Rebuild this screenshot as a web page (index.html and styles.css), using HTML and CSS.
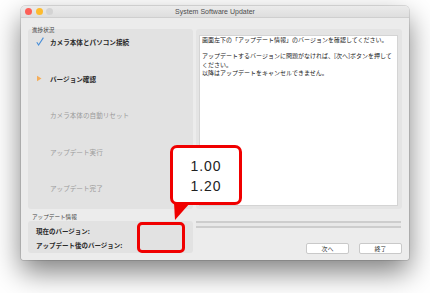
FILE: index.html
```html
<!DOCTYPE html>
<html lang="ja">
<head>
    <meta charset="UTF-8">
    <title>System Software Updater</title>
    <link rel="stylesheet" href="styles.css">
</head>
<body>
    <div class="window">
        <div class="titlebar">
            <span class="light red"></span>
            <span class="light yellow"></span>
            <span class="light off"></span>
            <span class="title">System Software Updater</span>
        </div>

        <div class="content">
            <div class="left">
                <div class="group-label">進捗状況</div>
                <ul class="steps">
                    <li class="done">
                        <svg class="mark" width="8" height="9" viewBox="0 0 8 9"><path d="M0.8 5.2 L2.6 8 L7.4 0.6" fill="none" stroke="#4a8fd8" stroke-width="1.1"/></svg>
                        カメラ本体とパソコン接続
                    </li>
                    <li class="current">
                        <svg class="mark" width="8" height="9" viewBox="0 0 8 9"><polygon points="1,1.8 5.5,4.5 1,7.2" fill="#f4ad5a"/></svg>
                        バージョン確認
                    </li>
                    <li>カメラ本体の自動リセット</li>
                    <li>アップデート実行</li>
                    <li>アップデート完了</li>
                </ul>
                <div class="group-label second">アップデート情報</div>
                <div class="info">
                    <div>現在のバージョン:</div>
                    <div>アップデート後のバージョン:</div>
                </div>
            </div>

            <div class="right">
                <div class="message-frame">
                    <div class="message">
                        画面左下の「アップデート情報」のバージョンを確認してください。<br>
                        <br>
                        アップデートするバージョンに問題がなければ、[次へ]ボタンを押して<br>
                        ください。<br>
                        以降はアップデートをキャンセルできません。
                    </div>
                </div>
                <div class="progress"></div>
                <div class="buttons">
                    <button class="btn">次へ</button>
                    <button class="btn">終了</button>
                </div>
            </div>
        </div>

        <!-- annotation drawn over the window -->
        <div class="callout">
            <div>1.00</div>
            <div>1.20</div>
        </div>
        <svg class="callout-tail" width="16" height="18" viewBox="0 0 16 18"><polygon points="0,0 16,0 1,17" fill="#f00000"/></svg>
        <div class="highlight-box"></div>
    </div>
</body>
</html>
```

FILE: styles.css
```css
html {
    background-color: #ffffff;
}
body {
    margin: 0;
    padding: 6px 0 0 21px;
    min-height: 293px;
    box-sizing: border-box;
    font-family: "Noto Sans CJK JP", "Liberation Sans", sans-serif;
}
.window {
    position: relative;
    width: 388px;
    height: 254px;
    background-color: #ececec;
    border-radius: 4px 4px 2px 2px;
    box-shadow: 0 12px 28px rgba(0, 0, 0, 0.5), 0 0 0 0.5px rgba(0, 0, 0, 0.22);
}
.titlebar {
    display: flex;
    align-items: center;
    height: 11px;
    padding-left: 4px;
    background: linear-gradient(#ebebeb, #dedede);
    border-bottom: 1px solid #cfcfcf;
    border-radius: 4px 4px 0 0;
    position: relative;
}
.light {
    width: 7px;
    height: 7px;
    border-radius: 50%;
    margin-right: 3.5px;
}
.light.red {
    background-color: #fc5f57;
}
.light.yellow {
    background-color: #fdbb2e;
}
.light.off {
    background-color: #d3d3d3;
}
.title {
    position: absolute;
    left: 0;
    right: 0;
    text-align: center;
    font-family: "Liberation Sans", sans-serif;
    font-size: 7px;
    line-height: 11px;
    color: #4d4d4d;
}
.content {
    display: flex;
    gap: 3px;
    padding: 2px 6px 0 7px;
}
.left {
    width: 165px;
}
.group-label {
    height: 2px;
    line-height: 6px;
    padding: 7px 0 0 4px;
    font-size: 5.6px;
    color: #444;
}
.group-label.second {
    height: 7px;
    line-height: 7px;
    padding-top: 5px;
}
.steps {
    list-style: none;
    margin: 0;
    padding: 8px 0 0 22px;
    height: 172px;
    background-color: #e2e2e2;
    border-radius: 3px;
}
.steps li {
    position: relative;
    height: 36.5px;
    line-height: 10px;
    font-size: 6.6px;
    color: #9a9a9a;
}
.steps li.done,
.steps li.current {
    color: #2a2a2a;
    font-weight: bold;
}
.mark {
    position: absolute;
    left: -14px;
    top: 0;
}
.info {
    height: 29px;
    padding: 3px 0 0 8px;
    background-color: #e2e2e2;
    border-radius: 3px;
    font-size: 6.5px;
    font-weight: bold;
    line-height: 14px;
    color: #2a2a2a;
}
.right {
    width: 206px;
    padding-top: 9px;
}
.message-frame {
    height: 171px;
    padding: 6px 4px 3px 3px;
    background-color: #e4e4e4;
    border-radius: 3px;
}
.message {
    height: 100%;
    box-sizing: border-box;
    padding: 0 2px;
    background-color: #ffffff;
    border: 1px solid #d4d4d4;
    font-size: 6px;
    line-height: 8.2px;
    color: #222;
    white-space: nowrap;
}
.progress {
    height: 3px;
    margin-top: 12px;
    margin-right: 1px;
    background-color: #e8e8e8;
    border-top: 2px solid #cdcdcd;
    border-bottom: 2px solid #cdcdcd;
}
.buttons {
    display: flex;
    justify-content: flex-end;
    gap: 10px;
    margin-top: 15px;
}
.btn {
    width: 43px;
    height: 11px;
    padding: 0;
    background-color: #ffffff;
    border: 1px solid #c9c9c9;
    border-radius: 2px;
    font-family: "Noto Sans CJK JP", sans-serif;
    font-size: 6px;
    line-height: 9px;
    color: #333;
}
.callout {
    position: absolute;
    left: 149px;
    top: 139px;
    width: 72px;
    height: 60px;
    box-sizing: border-box;
    padding-top: 8px;
    background-color: #ffffff;
    border: 3px solid #f00000;
    border-radius: 7px;
    text-align: center;
    font-family: "Liberation Sans", sans-serif;
    font-size: 14px;
    letter-spacing: 1px;
    line-height: 20px;
    color: #222;
}
.callout-tail {
    position: absolute;
    left: 153px;
    top: 197px;
}
.highlight-box {
    position: absolute;
    left: 116px;
    top: 216px;
    width: 48px;
    height: 31px;
    box-sizing: border-box;
    border: 3px solid #f00000;
    border-radius: 5px;
}
```
